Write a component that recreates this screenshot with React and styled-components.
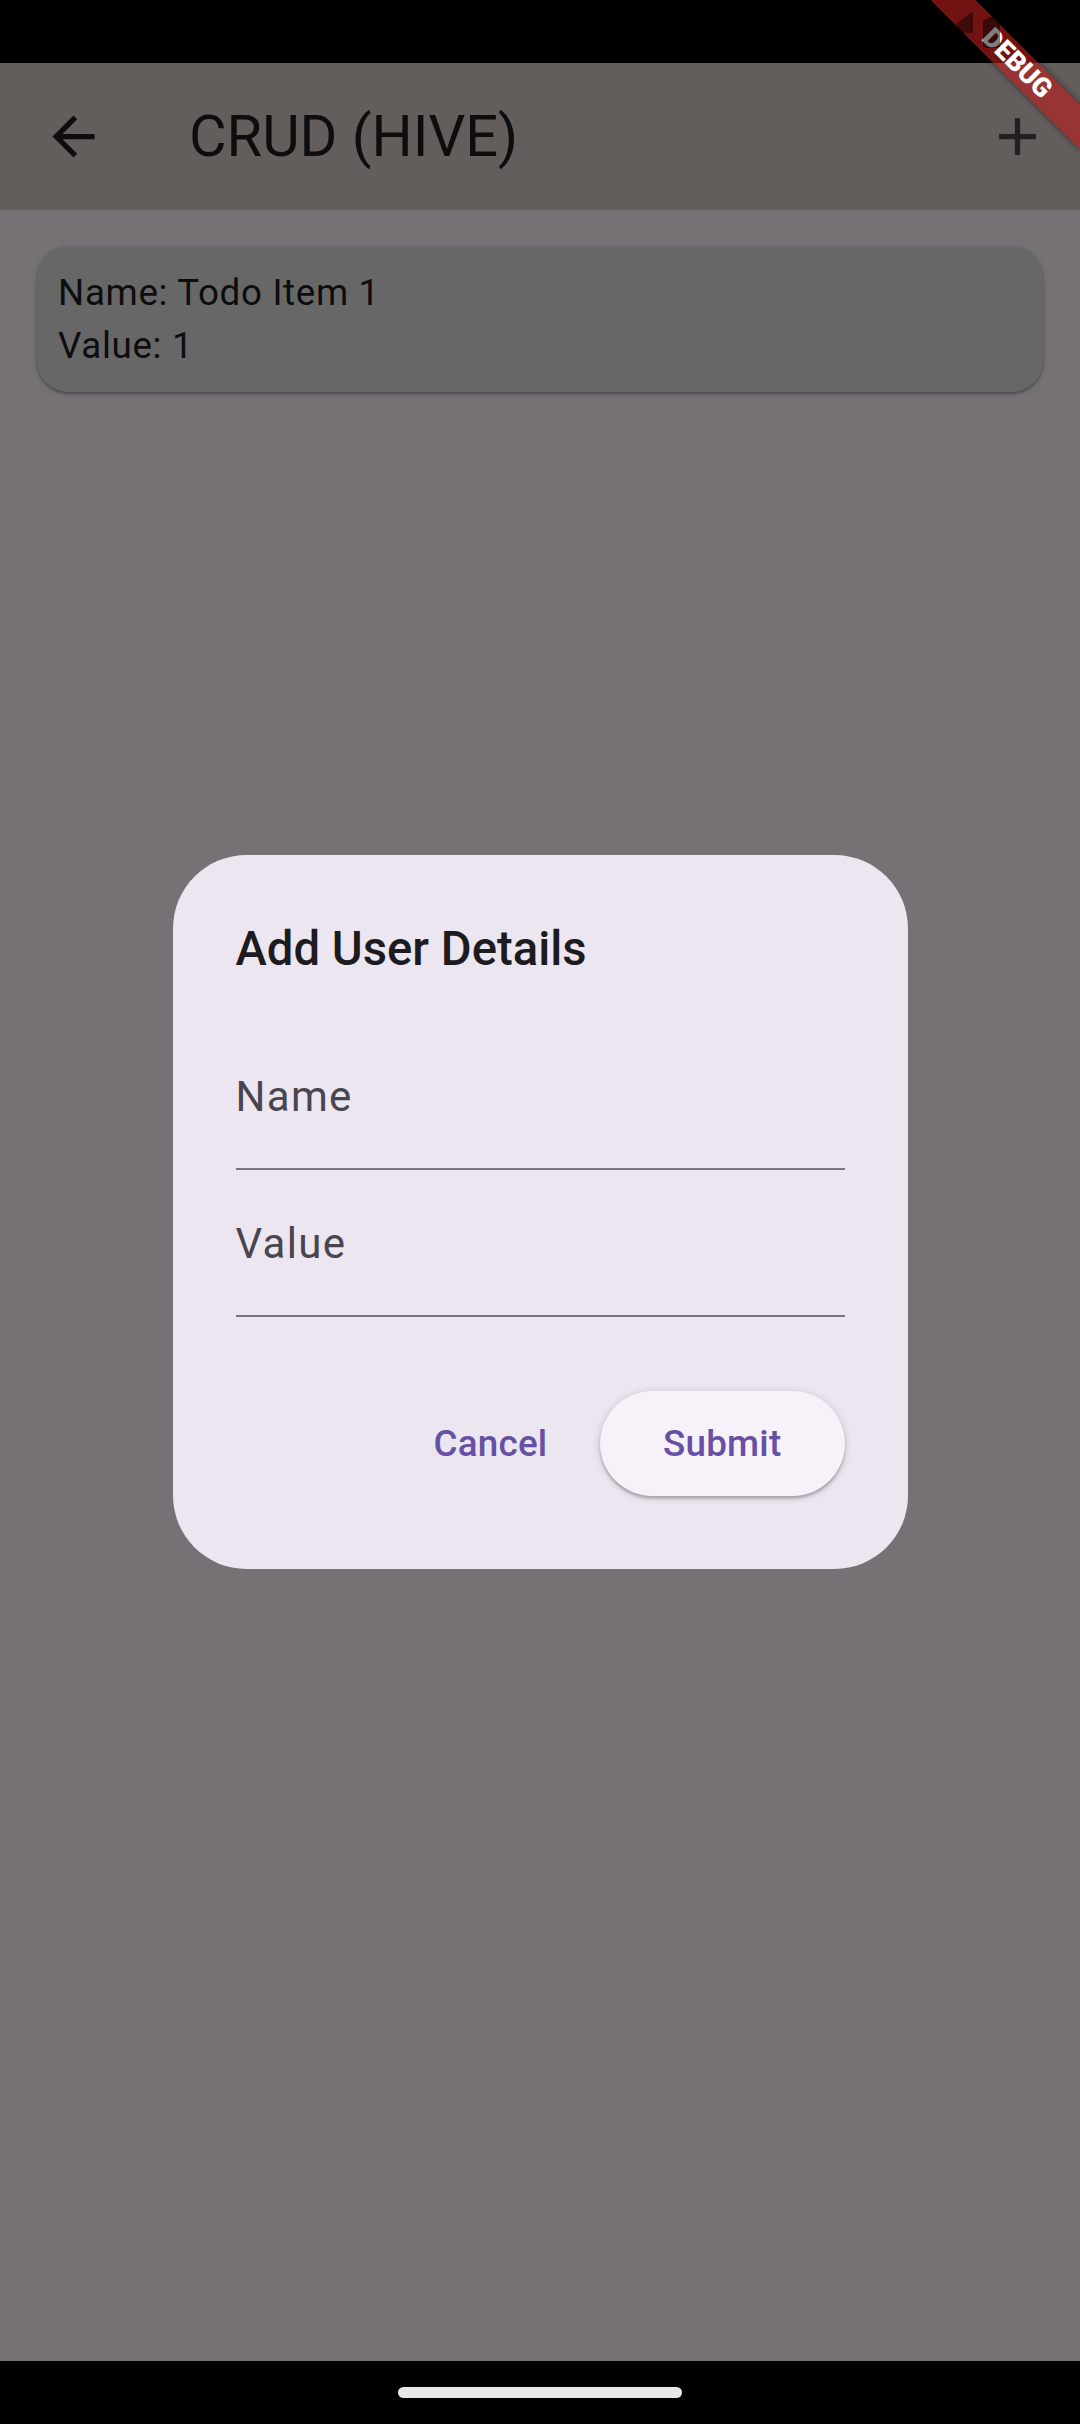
import React from "react";
import styled, { createGlobalStyle } from "styled-components";

const GlobalStyle = createGlobalStyle`
  html, body {
    margin: 0;
    padding: 0;
    background: #000;
  }
  body {
    font-family: Roboto, "Noto Sans", "Liberation Sans", sans-serif;
    -webkit-font-smoothing: antialiased;
  }
  *, *::before, *::after {
    box-sizing: border-box;
  }
`;

const Screen = styled.div`
  position: relative;
  width: 1080px;
  height: 2424px;
  overflow: hidden;
  display: flex;
  flex-direction: column;
  background: #000;
`;

const StatusBar = styled.div`
  position: relative;
  z-index: 2;
  flex: none;
  height: 63px;
  background: transparent;
  display: flex;
  justify-content: flex-end;
  align-items: flex-start;
  padding: 11px 80px 0 0;
  gap: 10px;
`;

const Viewport = styled.div`
  position: relative;
  flex: 1;
  display: flex;
  flex-direction: column;
  background: #fef7ff;
`;

const AppBar = styled.header`
  flex: none;
  height: 147px;
  display: flex;
  align-items: center;
  background: #d7ccc8;
`;

const IconSlot = styled.button`
  flex: none;
  width: ${(p) => p.$width}px;
  height: 147px;
  display: flex;
  align-items: center;
  justify-content: center;
  border: 0;
  padding: 0;
  background: transparent;
  color: ${(p) => p.$color};
`;

const AppTitle = styled.h1`
  flex: 1;
  margin: 0 0 0 42px;
  font-size: 57.75px;
  line-height: 73.5px;
  font-weight: 400;
  color: #1d1b20;
  letter-spacing: 0;
`;

const Body = styled.main`
  flex: 1;
  padding: 37px;
`;

const ItemCard = styled.div`
  background: #e0e0e0;
  border-radius: 31.5px;
  padding: 20px 21px;
  box-shadow: 0 1.3px 2.6px rgba(0, 0, 0, 0.25), 0 1.3px 5px 1px rgba(0, 0, 0, 0.1);
`;

const ItemLine = styled.div`
  font-size: 36.75px;
  line-height: 52.5px;
  letter-spacing: 0.66px;
  color: #1d1b20;
`;

const Scrim = styled.div`
  position: absolute;
  inset: 0;
  background: rgba(0, 0, 0, 0.54);
  display: flex;
  align-items: center;
  justify-content: center;
`;

const Dialog = styled.div`
  width: 735px;
  background: #ece6f0;
  border-radius: 73.5px;
  padding: 63px;
  display: flex;
  flex-direction: column;
`;

const DialogTitle = styled.h2`
  margin: 0 0 42px 0;
  font-size: 47.25px;
  line-height: 63px;
  font-weight: 500;
  color: #1d1b20;
`;

const Field = styled.label`
  display: block;
  height: 147px;
  padding-top: 49px;
  border-bottom: 2.625px solid #79747e;
`;

const FieldLabel = styled.span`
  display: block;
  font-size: 42px;
  line-height: 49px;
  letter-spacing: 1.3px;
  color: #49454f;
`;

const Actions = styled.div`
  margin-top: 63px;
  height: 126px;
  display: flex;
  justify-content: flex-end;
  align-items: center;
  gap: 21px;
`;

const ActionButton = styled.button`
  height: 105px;
  padding: 0 ${(p) => (p.$elevated ? 63 : 31.5)}px;
  border: 0;
  border-radius: 52.5px;
  font-family: inherit;
  font-size: 36.75px;
  font-weight: 500;
  letter-spacing: 0.26px;
  color: #6750a4;
  background: ${(p) => (p.$elevated ? "#f7f2fa" : "transparent")};
  box-shadow: ${(p) =>
    p.$elevated
      ? "0 2.6px 2.6px rgba(0,0,0,0.22), 0 1.3px 7.8px 1.3px rgba(0,0,0,0.12)"
      : "none"};
`;

const NavBar = styled.div`
  flex: none;
  height: 63px;
  background: #000;
  display: flex;
  align-items: center;
  justify-content: center;
`;

const Handle = styled.div`
  width: 284px;
  height: 11px;
  border-radius: 6px;
  background: #e8e8e8;
`;

const DebugBanner = styled.div`
  position: absolute;
  z-index: 1;
  top: 73.5px;
  left: 975px;
  width: 210px;
  height: 31.5px;
  transform-origin: 105px -73.5px;
  transform: rotate(45deg);
  background: rgba(183, 28, 28, 0.627);
  box-shadow: 0 0 6px rgba(0, 0, 0, 0.5);
  color: #fff;
  font-size: 26.8px;
  font-weight: 900;
  line-height: 31.5px;
  text-align: center;
`;

const StatusGlyph = styled.svg`
  display: block;
  flex: none;
`;

const ArrowBack = () => (
  <svg width="63" height="63" viewBox="0 0 24 24" fill="currentColor">
    <path d="M20 11H7.83l5.59-5.59L12 4l-8 8 8 8 1.41-1.41L7.83 13H20v-2z" />
  </svg>
);

const AddIcon = () => (
  <svg width="63" height="63" viewBox="0 0 24 24" fill="currentColor">
    <path d="M19 13h-6v6h-2v-6H5v-2h6V5h2v6h6v2z" />
  </svg>
);

export default function App() {
  return (
    <>
      <GlobalStyle />
      <Screen>
        <StatusBar>
          <StatusGlyph width="28" height="22" viewBox="0 0 28 22">
            <polygon points="0,22 28,0 28,22" fill="rgba(0,0,0,0.45)" />
          </StatusGlyph>
          <StatusGlyph width="17" height="31" viewBox="0 0 17 31" style={{ marginTop: 6 }}>
            <rect x="5" y="0" width="7" height="3" rx="1" fill="rgba(0,0,0,0.5)" />
            <rect x="0" y="2" width="17" height="29" rx="3" fill="rgba(0,0,0,0.5)" />
          </StatusGlyph>
        </StatusBar>
        <Viewport>
          <AppBar>
            <IconSlot $width={147} $color="#1d1b20" aria-label="Back">
              <ArrowBack />
            </IconSlot>
            <AppTitle>CRUD (HIVE)</AppTitle>
            <IconSlot $width={126} $color="#49454f" aria-label="Add">
              <AddIcon />
            </IconSlot>
          </AppBar>
          <Body>
            <ItemCard>
              <ItemLine>Name: Todo Item 1</ItemLine>
              <ItemLine>Value: 1</ItemLine>
            </ItemCard>
          </Body>
          <Scrim>
            <Dialog>
              <DialogTitle>Add User Details</DialogTitle>
              <Field>
                <FieldLabel>Name</FieldLabel>
              </Field>
              <Field>
                <FieldLabel>Value</FieldLabel>
              </Field>
              <Actions>
                <ActionButton>Cancel</ActionButton>
                <ActionButton $elevated>Submit</ActionButton>
              </Actions>
            </Dialog>
          </Scrim>
        </Viewport>
        <NavBar>
          <Handle />
        </NavBar>
        <DebugBanner>DEBUG</DebugBanner>
      </Screen>
    </>
  );
}
